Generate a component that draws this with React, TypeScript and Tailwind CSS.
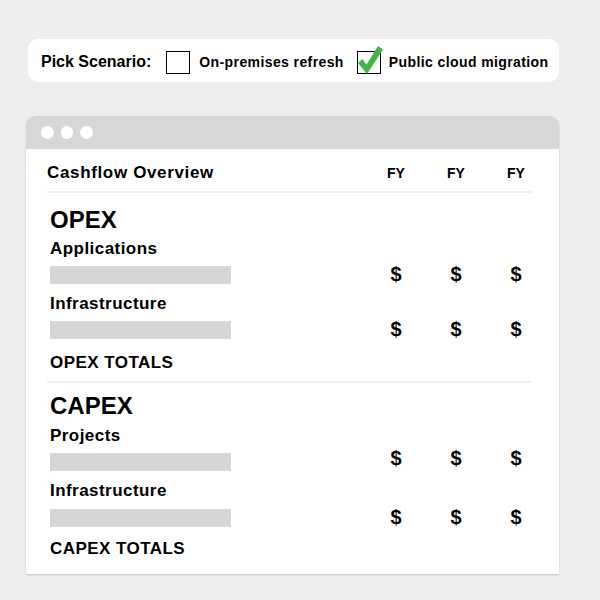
const font = { fontFamily: '"Liberation Sans", Arial, sans-serif' }

function Checkbox({ checked }: { checked?: boolean }) {
  return (
    <div className="relative h-[23px] w-[24px] shrink-0 border border-black bg-white">
      {checked && (
        <svg
          className="absolute left-[-2px] top-[-8px]"
          width="30"
          height="32"
          viewBox="0 0 30 32"
        >
          <path
            d="M2 19 L6.5 15 L10.5 20.5 L22 2 L27 5.5 L11 30 Z"
            fill="#3fb54b"
          />
        </svg>
      )}
    </div>
  )
}

function Dollars({ lift }: { lift?: boolean }) {
  const cls = lift
    ? '-mt-[8px] text-center text-[20px] font-bold leading-[20px]'
    : '-mt-[2px] text-center text-[20px] font-bold leading-[20px]'
  return (
    <>
      <span className={cls}>$</span>
      <span className={cls}>$</span>
      <span className={cls}>$</span>
    </>
  )
}

function BarRow({ className, lift }: { className: string; lift?: boolean }) {
  return (
    <div
      className={`grid h-[18px] grid-cols-[1fr_30px_30px_30px] items-center gap-x-[30px] ${className}`}
    >
      <div className="h-[18px] w-[181px] bg-[#d6d6d6]" />
      <Dollars lift={lift} />
    </div>
  )
}

function Label({ children, className }: { children: string; className: string }) {
  return (
    <div className={`h-[20px] text-[17px] font-bold leading-[20px] tracking-[0.45px] ${className}`}>
      {children}
    </div>
  )
}

export default function App() {
  return (
    <div className="min-h-[600px] w-[600px] bg-[#efeeec] pt-[39px] text-black" style={font}>
      <div className="ml-[28px] flex h-[43px] w-[531px] items-center rounded-[10px] bg-white pl-[13px] pt-[3px]">
        <span className="text-[16px] font-bold">Pick Scenario:</span>
        <div className="ml-[15px]">
          <Checkbox />
        </div>
        <span className="ml-[9px] text-[14px] font-bold tracking-[0.4px]">On-premises refresh</span>
        <div className="ml-[13px]">
          <Checkbox checked />
        </div>
        <span className="ml-[8px] text-[14px] font-bold tracking-[0.4px]">Public cloud migration</span>
      </div>

      <div className="ml-[26px] mt-[34px] w-[533px] rounded-t-[9px] bg-white shadow-[0_1px_2px_rgba(0,0,0,0.18)]">
        <div className="flex h-[33px] items-center gap-[7px] rounded-t-[9px] bg-[#d7d7d7] pl-[15px]">
          <span className="h-[12.5px] w-[12.5px] rounded-full bg-white" />
          <span className="h-[12.5px] w-[12.5px] rounded-full bg-white" />
          <span className="h-[12.5px] w-[12.5px] rounded-full bg-white" />
        </div>

        <div className="pb-[15px] pl-[21px] pr-[28px] pt-[12px]">
          <div className="grid h-[24px] grid-cols-[1fr_30px_30px_30px] items-center gap-x-[30px]">
            <span className="text-[17px] font-bold leading-[24px] tracking-[0.65px]">
              Cashflow Overview
            </span>
            <span className="text-center text-[14px] font-bold">FY</span>
            <span className="text-center text-[14px] font-bold">FY</span>
            <span className="text-center text-[14px] font-bold">FY</span>
          </div>
          <div className="mt-[6px] h-[2px] bg-[#efefef]" />

          <div className="pl-[3px]">
            <div className="mt-[14px] h-[26px] text-[24px] font-bold leading-[26px]">OPEX</div>
            <Label className="mt-[6px]">Applications</Label>
            <BarRow className="mt-[7px]" />
            <Label className="mt-[10px]">Infrastructure</Label>
            <BarRow className="mt-[7px]" />
            <Label className="mt-[14px]">OPEX TOTALS</Label>
          </div>
          <div className="mt-[8px] h-[2px] bg-[#efefef]" />

          <div className="pl-[3px]">
            <div className="mt-[10px] h-[26px] text-[24px] font-bold leading-[26px]">CAPEX</div>
            <Label className="mt-[7px]">Projects</Label>
            <BarRow className="mt-[7px]" lift />
            <Label className="mt-[10px]">Infrastructure</Label>
            <BarRow className="mt-[8px]" />
            <Label className="mt-[12px]">CAPEX TOTALS</Label>
          </div>
        </div>
      </div>
    </div>
  )
}
